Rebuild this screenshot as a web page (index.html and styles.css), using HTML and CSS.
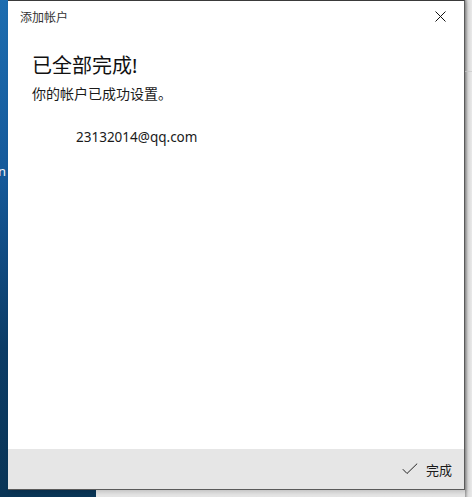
FILE: index.html
```html
<!DOCTYPE html>
<html lang="zh-CN">
<head>
  <meta charset="UTF-8" />
  <meta name="viewport" content="width=device-width, initial-scale=1.0"/>
  <title>添加帐户</title>
  <link rel="stylesheet" href="styles.css">
</head>
<body>
  <div class="desktop">
    <span class="desk-label">n</span>
    <div class="dialog">
      <div class="titlebar">
        <span class="title">添加帐户</span>
        <button class="close" aria-label="关闭">
          <svg width="11" height="11" viewBox="0 0 11 11">
            <path d="M0.5 0.5 L10.5 10.5 M10.5 0.5 L0.5 10.5" stroke="#111" stroke-width="1" fill="none"/>
          </svg>
        </button>
      </div>

      <div class="content">
        <h1>已全部完成!</h1>
        <p class="sub">你的帐户已成功设置。</p>
        <p class="account">23132014@qq.com</p>
      </div>

      <div class="footer">
        <button class="done">
          <svg width="16" height="12" viewBox="0 0 16 12">
            <path d="M0.8 6.2 L5 10.5 L15.2 0.6" stroke="#222" stroke-width="1" fill="none"/>
          </svg>
          <span>完成</span>
        </button>
      </div>
    </div>
  </div>
</body>
</html>
```

FILE: styles.css
```css
* {
  margin: 0;
  padding: 0;
  box-sizing: border-box;
}

body {
  width: 472px;
  height: 497px;
  overflow: hidden;
  font-family: "Noto Sans", "Noto Sans CJK SC", sans-serif;
  color: #1a1a1a;
}

/* desktop behind the window: blue wallpaper on the left, grey app on the right */
.desktop {
  position: relative;
  height: 497px;
  background:
    linear-gradient(to bottom, transparent 71px, #d2d2d2 71px, #d2d2d2 72px, transparent 72px) right top / 7px 100% no-repeat,
    linear-gradient(to right, #9a9a9a, #dcdcdc 3px, #e9e9e9) right top / 7px 100% no-repeat,
    linear-gradient(to bottom, #1d6db0 0%, #15599a 35%, #0c3c66 70%, #0a3556 100%) left top / 96px 100% no-repeat,
    linear-gradient(to bottom, #a9a9a9, #dcdcdc 3px, #e4e4e4);
}

/* edge of a desktop icon caption peeking out beside the window */
.desk-label {
  position: absolute;
  left: -2px;
  top: 162px;
  font-size: 13px;
  color: #f2f6fa;
}

.dialog {
  position: relative;
  margin-left: 8px;
  width: 457px;
  height: 490px;
  background: #fff;
  border-top: 1px solid #3a3a3a;
  border-right: 1px solid #5a5a5a;
  border-bottom: 1px solid #5a5a5a;
  display: flex;
  flex-direction: column;
  box-shadow: 2px 2px 4px rgba(0, 0, 0, 0.15);
}

.titlebar {
  display: flex;
  align-items: center;
  justify-content: space-between;
  height: 31px;
  padding: 0 12px;
}

.title {
  font-size: 12px;
  color: #333;
}

.close {
  border: none;
  background: none;
  width: 11px;
  height: 11px;
  margin-right: 6px;
  display: flex;
}

.content {
  flex: 1;
  padding: 19px 24px 0;
}

.content h1 {
  font-size: 20px;
  font-weight: 400;
  line-height: 30px;
  color: #111;
}

.sub {
  font-size: 14px;
  line-height: 20px;
  margin-top: 3px;
}

.account {
  font-size: 13.5px;
  line-height: 20px;
  margin-top: 23px;
  margin-left: 44px;
}

.footer {
  height: 40px;
  background: #e6e6e6;
  display: flex;
  align-items: center;
  justify-content: flex-end;
  padding-right: 12px;
}

.done {
  border: none;
  background: none;
  display: flex;
  align-items: center;
  gap: 8px;
  font-family: inherit;
  font-size: 13px;
  color: #1a1a1a;
}
```
